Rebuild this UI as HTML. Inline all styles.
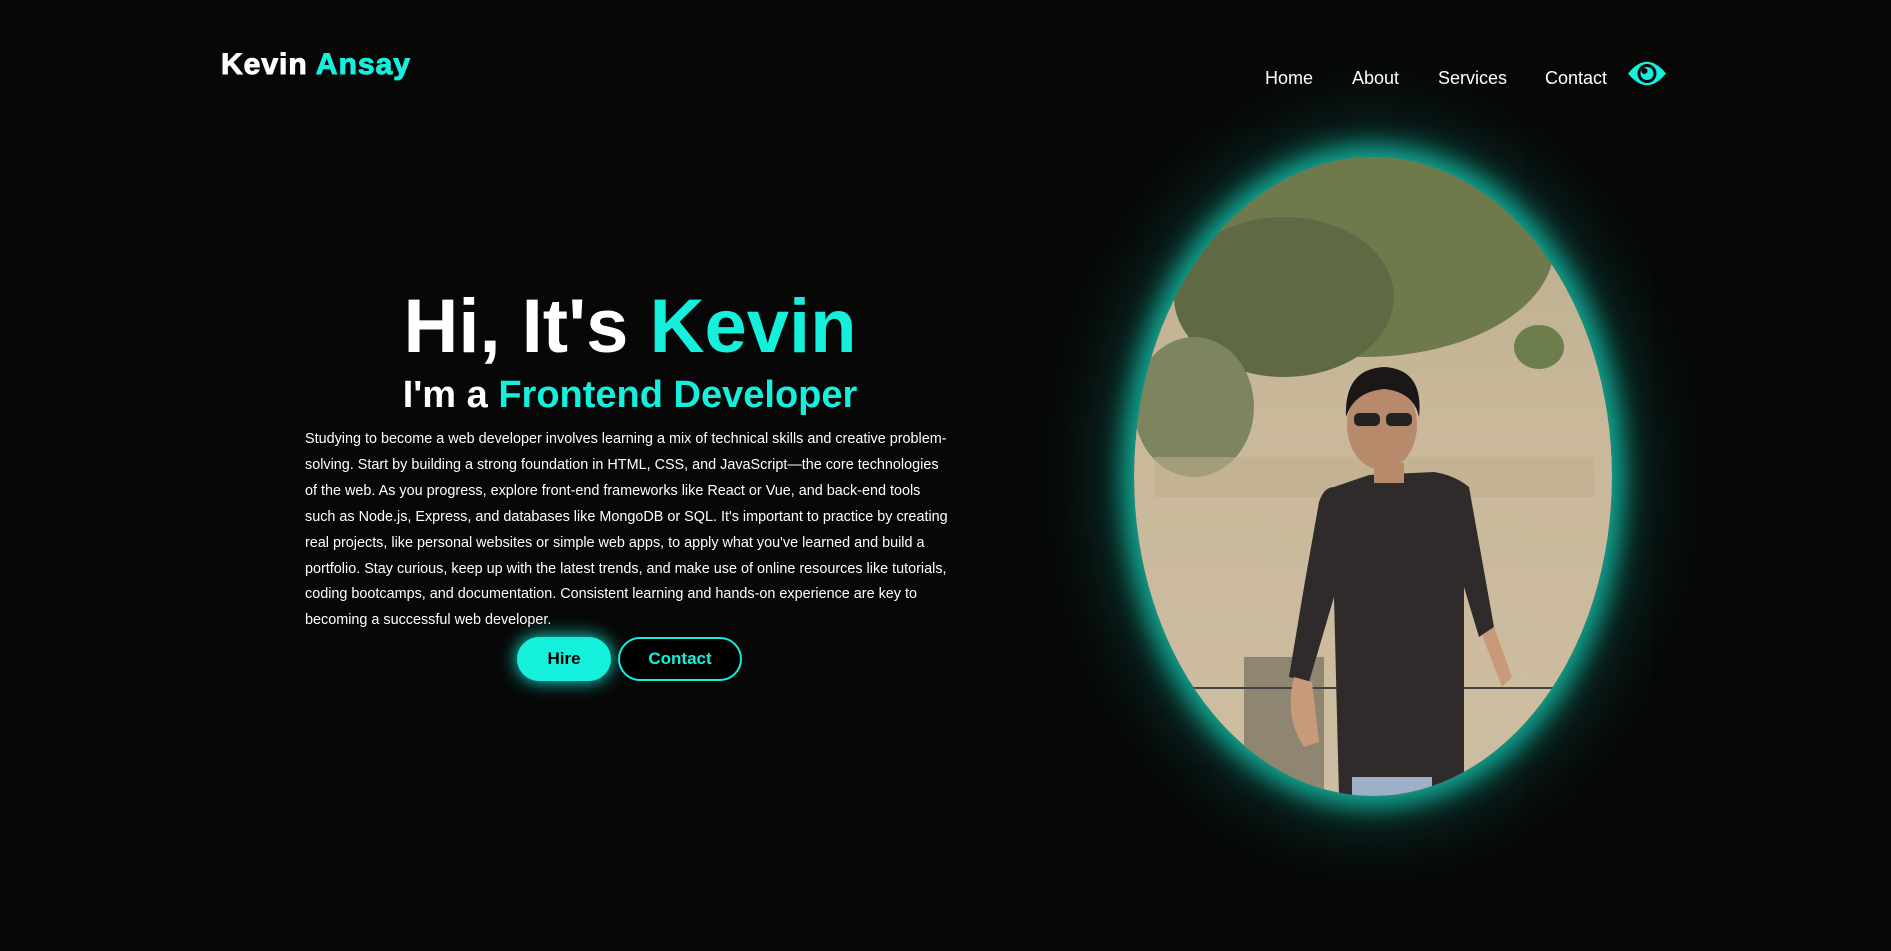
<!DOCTYPE html>
<html><head><meta charset="utf-8"><style>
*{margin:0;padding:0;box-sizing:border-box}
body{width:1891px;height:951px;background:#070707;font-family:"Liberation Sans",Arial,sans-serif;position:relative;overflow:hidden;color:#fff}
.logo{position:absolute;left:221px;top:48px;font-size:30px;font-weight:900;letter-spacing:1px;-webkit-text-stroke:1px currentColor}
.c{color:#14f0dc}
.nav a{position:absolute;top:68px;font-size:18px;color:#fff;text-decoration:none}
h1{position:absolute;left:0;width:1260px;text-align:center;top:282px;font-size:76px;font-weight:bold;line-height:90px}
h2{position:absolute;left:0;width:1260px;text-align:center;top:373px;font-size:38px;font-weight:bold;line-height:44px}
p{position:absolute;left:305px;top:427px;width:648px;font-size:14.4px;line-height:25.9px}
.btn{position:absolute;top:637px;height:44px;border-radius:22px;font-size:17px;font-weight:bold;text-align:center;line-height:40px;border:2px solid #14f0dc}
.hire{left:517px;width:94px;background:#14f0dc;color:#000;box-shadow:0 0 18px #14f0dc}
.contact{left:618px;width:124px;color:#14f0dc;background:#000}
.ph{position:absolute;left:1134px;top:157px;width:478px;height:639px;border-radius:50%;box-shadow:0 0 25px 12px rgba(20,200,175,.8),0 0 80px 30px rgba(20,160,140,.3);overflow:hidden}
</style></head><body>
<div class="logo">Kevin <span class="c">Ansay</span></div>
<div class="nav"><a style="left:1265px">Home</a><a style="left:1352px">About</a><a style="left:1438px">Services</a><a style="left:1545px">Contact</a></div>
<svg style="position:absolute;left:1627px;top:58px" width="40" height="31" viewBox="0 0 40 31"><path d="M1 15.5 Q20 -8 39 15.5 Q20 39 1 15.5Z" fill="#14f0dc"/><circle cx="20" cy="15.5" r="9.5" fill="#070707"/><circle cx="20" cy="15.5" r="6.5" fill="#14f0dc"/><circle cx="17.5" cy="13" r="3" fill="#070707"/></svg>
<h1>Hi, It's <span class="c">Kevin</span></h1>
<h2>I'm a <span class="c">Frontend Developer</span></h2>
<p>Studying to become a web developer involves learning a mix of technical skills and creative problem-solving. Start by building a strong foundation in HTML, CSS, and JavaScript—the core technologies of the web. As you progress, explore front-end frameworks like React or Vue, and back-end tools such as Node.js, Express, and databases like MongoDB or SQL. It's important to practice by creating real projects, like personal websites or simple web apps, to apply what you've learned and build a portfolio. Stay curious, keep up with the latest trends, and make use of online resources like tutorials, coding bootcamps, and documentation. Consistent learning and hands-on experience are key to becoming a successful web developer.</p>
<div class="btn hire">Hire</div>
<div class="btn contact">Contact</div>
<div class="ph"><svg width="478" height="639" viewBox="0 0 478 639">
<defs><linearGradient id="bg" x1="0" y1="0" x2="0" y2="1"><stop offset="0" stop-color="#b9ac8e"/><stop offset=".4" stop-color="#c9b89a"/><stop offset="1" stop-color="#cdbda2"/></linearGradient></defs>
<rect width="478" height="639" fill="url(#bg)"/>
<ellipse cx="230" cy="90" rx="190" ry="110" fill="#6f7a4c"/>
<ellipse cx="150" cy="140" rx="110" ry="80" fill="#5f6a44"/>
<ellipse cx="60" cy="250" rx="60" ry="70" fill="#7c8560"/>
<ellipse cx="405" cy="190" rx="25" ry="22" fill="#6d7d4c"/>
<rect x="20" y="300" width="440" height="40" fill="#bfae90" opacity=".6"/>
<rect x="110" y="500" width="80" height="139" fill="#8e8671"/>
<rect x="0" y="530" width="478" height="2" fill="#444"/>
<path d="M200 330 Q190 330 185 345 L170 430 L155 520 L175 525 L200 440 L205 639 L330 639 L330 430 L345 480 L360 470 L335 330 Q320 318 300 315 L235 318Z" fill="#2f2b2b"/>
<path d="M160 520 Q150 560 170 590 L185 585 L178 525Z" fill="#c79a7a"/>
<path d="M348 478 L368 530 L378 520 L360 470Z" fill="#c79a7a"/>
<ellipse cx="248" cy="268" rx="35" ry="45" fill="#b88a6c"/>
<path d="M212 260 Q210 212 250 210 Q290 212 285 260 Q280 235 250 232 Q220 235 212 260Z" fill="#1b1716"/>
<rect x="220" y="256" width="26" height="13" rx="5" fill="#222"/><rect x="252" y="256" width="26" height="13" rx="5" fill="#222"/>
<rect x="240" y="306" width="30" height="20" fill="#b88a6c"/>
<rect x="218" y="620" width="80" height="19" fill="#9eb0c8"/>
</svg></div>
</body></html>
